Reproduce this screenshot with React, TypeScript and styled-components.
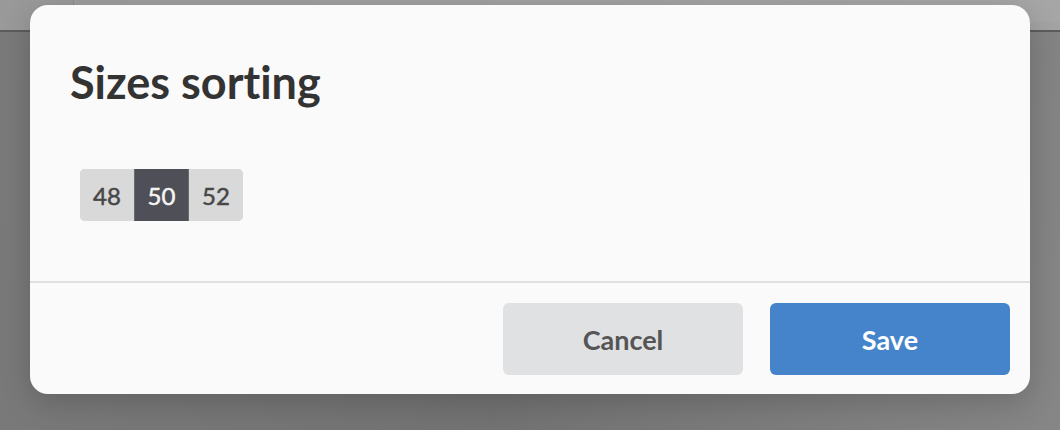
import React, { useState } from "react";
import styled, { createGlobalStyle } from "styled-components";

const GlobalStyle = createGlobalStyle`
  html, body { margin: 0; padding: 0; }
  body {
    width: 1060px;
    height: 430px;
    overflow: hidden;
    font-family: Lato, "Open Sans", sans-serif;
    font-variant-ligatures: none;
  }
`;

const Page = styled.div`
  position: relative;
  width: 1060px;
  height: 430px;
  background: linear-gradient(100deg, #7a7a7a 0%, #727272 50%, #868686 100%);
  display: flex;
  flex-direction: column;
`;

const TopBar = styled.div`
  height: 22px;
  background: linear-gradient(90deg, #9c9c9c, #a6a6a6);
  display: flex;
`;

const TopTab = styled.div`
  width: 73px;
  border-right: 1px solid #8e8e8e;
  background: #999;
`;

const SubBar = styled.div`
  height: 8px;
  background: linear-gradient(90deg, #9a9a9a, #a3a3a3);
  border-bottom: 2px solid #5c5c5c;
`;

const Modal = styled.div`
  position: absolute;
  left: 30px;
  top: 5px;
  width: 1000px;
  height: 389px;
  background: #fafafa;
  border-radius: 18px;
  box-shadow: 0 8px 30px rgba(0, 0, 0, 0.18);
  display: flex;
  flex-direction: column;
  overflow: hidden;
`;

const Body = styled.div`
  flex: 1;
  padding: 50px 40px 0 40px;
  display: flex;
  flex-direction: column;
`;

const Title = styled.h1`
  margin: 0;
  font-family: Lato, sans-serif;
  font-weight: 700;
  font-size: 45px;
  line-height: 54px;
  color: #333333;
  font-variant-ligatures: none;
`;

const Segmented = styled.div`
  margin: 60px 0 0 10px;
  display: inline-flex;
  align-self: flex-start;
  border-radius: 5px;
  overflow: hidden;
  background: #d9d9d9;
`;

const Segment = styled.button<{ $active?: boolean }>`
  width: ${(p) => (p.$active ? 55 : 54)}px;
  height: 52px;
  border: none;
  padding: 0;
  margin: 0;
  font-family: Lato, sans-serif;
  font-size: 24px;
  font-weight: 400;
  -webkit-text-stroke: 0.5px currentColor;
  color: ${(p) => (p.$active ? "#f4f4f4" : "#474747")};
  background: ${(p) => (p.$active ? "#4f5057" : "#d9d9d9")};
  border-left: ${(p) => (p.$active ? "1px solid #6b6c72" : "none")};
  border-right: ${(p) => (p.$active ? "1px solid #6b6c72" : "none")};
  cursor: pointer;
`;

const Divider = styled.div`
  height: 2px;
  background: #e0e0e0;
`;

const Footer = styled.div`
  display: flex;
  justify-content: flex-end;
  gap: 27px;
  padding: 20px 20px 19px 20px;
`;

const Button = styled.button<{ $primary?: boolean }>`
  width: 240px;
  height: 72px;
  border: none;
  border-radius: 6px;
  font-family: Lato, sans-serif;
  font-size: 27px;
  font-weight: 700;
  color: ${(p) => (p.$primary ? "#ffffff" : "#555555")};
  background: ${(p) => (p.$primary ? "#4584cb" : "#e0e1e3")};
  cursor: pointer;
`;

export default function App() {
  const [sel, setSel] = useState("50");
  return (
    <>
      <GlobalStyle />
      <Page>
        <TopBar>
          <TopTab />
        </TopBar>
        <SubBar />
        <Modal>
          <Body>
            <Title>Sizes sorting</Title>
            <Segmented>
              {["48", "50", "52"].map((s) => (
                <Segment key={s} $active={s === sel} onClick={() => setSel(s)}>
                  {s}
                </Segment>
              ))}
            </Segmented>
          </Body>
          <Divider />
          <Footer>
            <Button>Cancel</Button>
            <Button $primary>Save</Button>
          </Footer>
        </Modal>
      </Page>
    </>
  );
}
